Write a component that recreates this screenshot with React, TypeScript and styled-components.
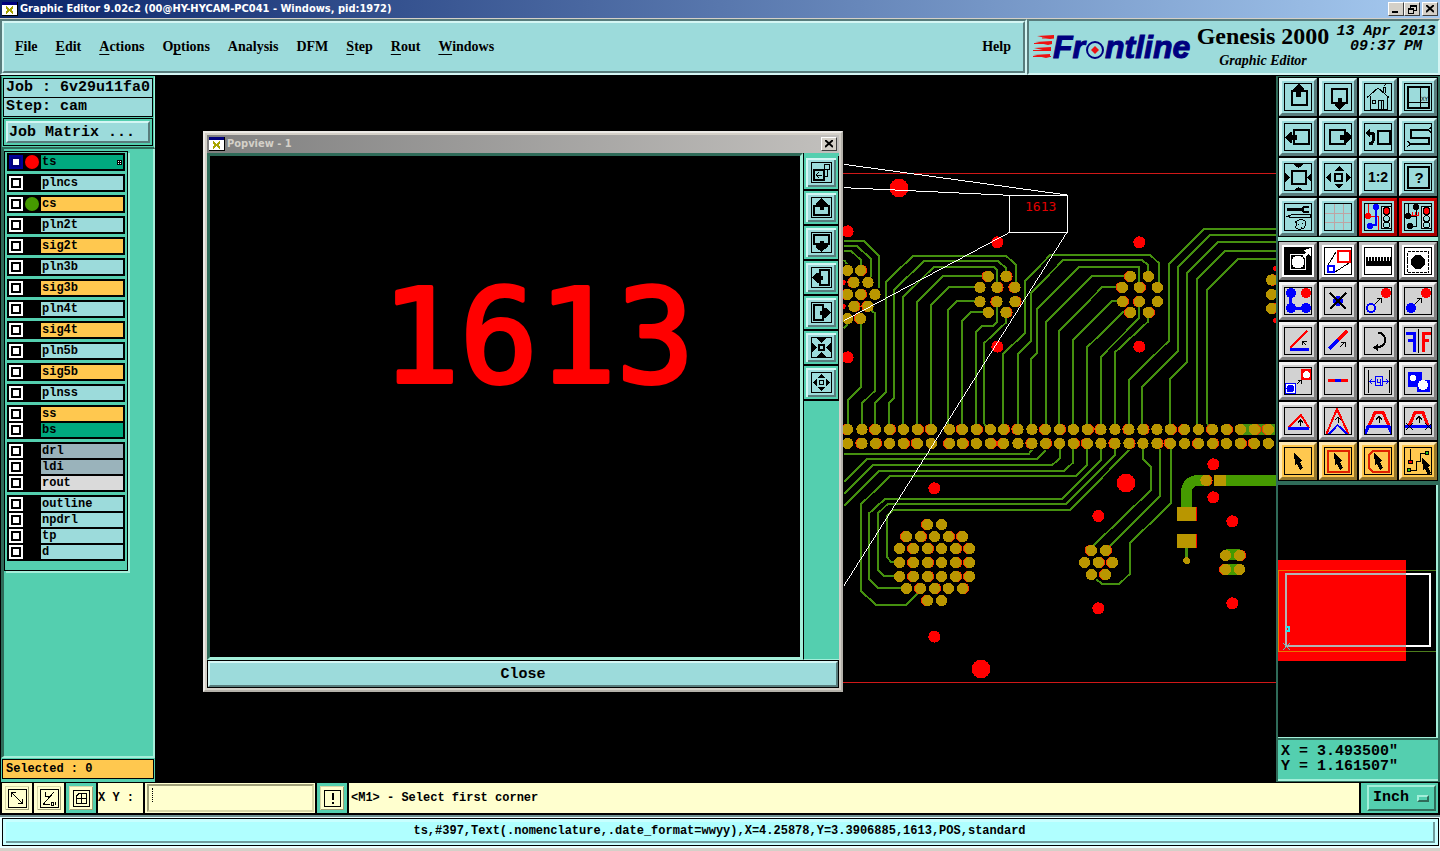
import React from 'react';
import styled, { createGlobalStyle, css } from 'styled-components';

const c = {
  panel: '#9cdbdb',
  panelLight: '#d4f6f4',
  panelDark: '#587c7c',
  teal: '#54cfaf',
  tealLight: '#a4efda',
  tealDark: '#2f6b59',
  amber: '#ffc84f',
  cream: '#ffffcf',
  creamLight: '#d8d8a8',
  creamDark: '#a0a078',
  grey: '#d2d2d2',
  face: '#d4d0c8',
  pad: '#b99600',
  trace: '#45900f',
  red: '#ff0000',
  blue: '#0000ff',
};

const mono = `'Liberation Mono', 'Courier New', monospace`;
const serif = `'Liberation Serif', 'Times New Roman', serif`;
const tahoma = `'DejaVu Sans Condensed', 'DejaVu Sans', sans-serif`;

const GlobalStyle = createGlobalStyle`
  * { box-sizing: border-box; }
  body { margin: 0; background: #000; color: #000; }
  button, input, select { font: inherit; color: inherit; margin: 0; padding: 0; border-radius: 0; }
  svg { display: block; }
`;

const bevel = (w: number, light: string, dark: string) => css`
  border-style: solid;
  border-width: ${w}px;
  border-color: ${light} ${dark} ${dark} ${light};
`;

const Page = styled.div`
  min-height: 100vh;
  display: flex;
  flex-direction: column;
`;

/* ---------- window title ---------- */
const TitleBar = styled.header<{ $inactive?: boolean }>`
  display: flex;
  align-items: center;
  gap: 2px;
  height: 18px;
  padding: 0 2px;
  flex: none;
  font: bold 11px/18px ${tahoma};
  color: ${p => (p.$inactive ? '#d4d0c8' : '#fff')};
  background: ${p =>
    p.$inactive ? 'linear-gradient(90deg,#808080,#c2c0bd)' : 'linear-gradient(90deg,#0a246a,#a6caf0)'};
`;
const TitleText = styled.span`
  flex: 1;
  white-space: nowrap;
`;
const WindowButtons = styled.div`
  display: flex;
`;
const WindowButton = styled.button<{ $apart?: boolean }>`
  width: 16px;
  height: 14px;
  margin-left: ${p => (p.$apart ? 2 : 0)}px;
  background: ${c.face};
  ${bevel(1, '#fff', '#404040')}
  display: grid;
  place-items: center;
`;

/* ---------- top row ---------- */
const TopRow = styled.div`
  display: flex;
  height: 57px;
  flex: none;
  background: ${c.panel};
  border-top: 1px solid #d4d0c8;
`;
const MenuFrame = styled.div`
  flex: 1;
  display: flex;
  ${bevel(2, c.panelDark, c.panelLight)}
`;
const MenuBar = styled.nav`
  flex: 1;
  display: flex;
  align-items: center;
  gap: 18px;
  padding: 0 12px 0 11px;
  font: bold 14px/18px ${serif};
  ${bevel(2, c.panelLight, c.panelDark)}
`;
const MenuItem = styled.button<{ $end?: boolean }>`
  border: 0;
  background: none;
  white-space: nowrap;
  margin-left: ${p => (p.$end ? 'auto' : 0)};
  u { text-underline-offset: 3px; text-decoration-thickness: 1px; }
`;
const Brand = styled.div`
  width: 413px;
  display: flex;
  ${bevel(2, c.panelDark, c.panelLight)}
`;
const Product = styled.div`
  width: 138px;
  text-align: center;
`;
const ProductName = styled.h1`
  margin: 0;
  font: bold 24px/30px ${serif};
  white-space: nowrap;
`;
const ProductMode = styled.div`
  font: italic bold 14px/20px ${serif};
`;
const Clock = styled.time`
  flex: 1;
  padding: 3px 0 0 2px;
  text-align: center;
  white-space: nowrap;
  font: italic bold 15px/15px ${mono};
`;

/* ---------- body ---------- */
const Body = styled.main`
  flex: 1;
  display: flex;
  min-height: 0;
  background: #000;
  padding-top: 1px;
`;
const LeftSide = styled.aside`
  width: 155px;
  flex: none;
  display: flex;
  flex-direction: column;
  background: ${c.teal};
  border-left: 1px solid #000;
`;
const Head = styled.div`
  border: 1px solid ${c.tealDark};
  border-color: ${c.teal} ${c.tealLight} ${c.tealDark} ${c.tealDark};
  border-bottom-width: 2px;
  padding: 1px;
`;
const Info = styled.div`
  height: 20px;
  margin-bottom: -1px;
  padding-left: 2px;
  border: 1px solid #000;
  background: ${c.panel};
  font: bold 15px/17px ${mono};
  white-space: pre;
`;
const MatrixFrame = styled.div`
  margin-top: 2px;
  padding: 2px;
  border: 1px solid #000;
`;
const MatrixButton = styled.button`
  width: 100%;
  height: 22px;
  padding-left: 1px;
  text-align: left;
  background: ${c.panel};
  font: bold 15px/17px ${mono};
  ${bevel(2, c.panelLight, c.panelDark)}
`;
const Scroll = styled.div`
  flex: 1;
  padding-top: 2px;
  border-left: 3px solid ${c.tealDark};
  border-right: 2px solid ${c.tealLight};
  border-bottom: 2px solid ${c.tealLight};
`;
const Layers = styled.div`
  width: 124px;
  height: 420px;
  padding: 1px 2px;
  border: 1px solid #000;
  box-shadow: 2px 2px 0 ${c.tealLight};
`;
const LayerGroup = styled.div`
  display: grid;
  gap: 2px;
  margin-bottom: 3px;
  padding: 2px;
  background: #000;
`;
const Layer = styled.label`
  display: grid;
  grid-template-columns: 14px 14px 1fr;
  column-gap: 2px;
  height: 14px;
`;
const LayerCheck = styled.input<{ $on: boolean }>`
  appearance: none;
  width: 14px;
  height: 14px;
  background: #fff;
  border: 2px solid ${p => (p.$on ? '#00009a' : '#fff')};
  box-shadow: inset 0 0 0 2px ${p => (p.$on ? '#00007c' : '#000')};
`;
const Dot = styled.span<{ $color?: string }>`
  border-radius: 50%;
  background: ${p => p.$color ?? 'transparent'};
`;
const LayerName = styled.span<{ $color: string }>`
  display: flex;
  justify-content: space-between;
  align-items: center;
  padding: 0 1px;
  overflow: hidden;
  background: ${p => p.$color};
  font: bold 12px/14px ${mono};
`;
const SelectedFrame = styled.div`
  padding: 1px 1px 3px;
`;
const Selected = styled.div`
  height: 20px;
  padding-left: 3px;
  border: 1px solid #000;
  background: ${c.amber};
  font: bold 12px/18px ${mono};
`;
const Stage = styled.section`
  position: relative;
  flex: 1;
  min-width: 0;
  overflow: hidden;
`;
const Board = styled.svg`
  position: absolute;
  inset: 0;
  width: 100%;
  height: 100%;
`;

/* ---------- pop-up view ---------- */
const Popup = styled.div`
  position: absolute;
  left: 48px;
  top: 55px;
  width: 640px;
  padding: 2px;
  background: ${c.face};
  ${bevel(2, '#eceae6', '#b4b1aa')}
`;
const PopBody = styled.div`
  display: flex;
  height: 507px;
  background: ${c.teal};
`;
const PopCanvas = styled.div`
  flex: 1;
  background: #000;
  border: 3px solid ${c.tealDark};
  border-right-color: ${c.tealLight};
  border-bottom-color: ${c.tealLight};
`;
const PopTools = styled.div`
  width: 36px;
  padding-top: 3px;
  border-left: 1px solid #000;
  border-bottom: 1px solid ${c.tealLight};
`;
const PopTool = styled.button`
  width: 35px;
  height: 35px;
  padding: 3px 4px;
  background: ${c.panel};
  border: 0;
  border-bottom: 2px solid #000;
  border-right: 1px solid #000;
  box-shadow: inset 0 0 0 2px ${c.teal}, inset 4px 4px 0 ${c.panelLight}, inset -4px -4px 0 ${c.panelDark};
  display: grid;
  place-items: center;
`;
const CloseRow = styled.div`
  padding: 1px;
  background: ${c.tealDark};
`;
const CloseButton = styled.button`
  width: 100%;
  height: 26px;
  padding-top: 1px;
  background: ${c.panel};
  font: bold 15px/20px ${mono};
  ${bevel(2, c.panelLight, c.panelDark)}
  outline: 1px solid #000;
`;

/* ---------- right side ---------- */
const RightSide = styled.aside`
  width: 164px;
  flex: none;
  display: flex;
  flex-direction: column;
  background: ${c.tealDark};
  padding: 1px 2px 0;
`;
const ToolGrid = styled.div<{ $second?: boolean }>`
  display: grid;
  grid-template-columns: repeat(4, 38px);
  gap: 2px;
  padding: 1px;
  background: #000;
  margin: ${p => (p.$second ? '0 0 4px' : '0')};
  border-bottom: ${p => (p.$second ? '0' : `4px solid ${c.tealLight}`)};
`;
type Tone = 'cyan' | 'alert' | 'white' | 'grey' | 'amber';
const tones: Record<Tone, [string, string, string]> = {
  cyan: [c.panel, c.panelLight, c.panelDark],
  alert: [c.panel, '#d80000', '#a80000'],
  white: ['#ffffff', '#c4c4c4', '#6c6c6c'],
  grey: [c.grey, '#f4f4f4', '#808080'],
  amber: [c.amber, '#ffe8b0', '#94762c'],
};
const Tool = styled.button<{ $tone: Tone }>`
  width: 38px;
  height: 38px;
  display: grid;
  place-items: center;
  background: ${p => tones[p.$tone][0]};
  ${p => bevel(3, tones[p.$tone][1], tones[p.$tone][2])}
`;
const Overview = styled.div`
  height: 253px;
  background: #000;
  border-right: 2px solid ${c.tealLight};
  border-bottom: 1px solid ${c.tealLight};
`;
const Coords = styled.div`
  flex: 1;
  padding: 4px 3px 0;
  margin-bottom: 1px;
  white-space: pre;
  background: ${c.teal};
  border: 2px solid ${c.tealDark};
  border-left: 0;
  border-right: 0;
  border-bottom-color: ${c.tealLight};
  font: bold 15px/15px ${mono};
`;

/* ---------- bottom rows ---------- */
const CommandRow = styled.div`
  display: flex;
  gap: 2px;
  height: 33px;
  flex: none;
  padding: 1px 2px 2px;
  background: #000;
  font: bold 12px/14px ${mono};
`;
const SmallTool = styled.button<{ $active?: boolean }>`
  width: 30px;
  flex: none;
  display: grid;
  place-items: center;
  background: ${c.cream};
  border: 3px solid ${p => (p.$active ? c.teal : c.cream)};
  box-shadow: inset 1px 1px 0 ${c.creamLight}, inset -1px -1px 0 ${c.creamDark};
`;
const EntryLabel = styled.label`
  width: 45px;
  flex: none;
  padding: 8px 0 0;
  background: ${c.cream};
  white-space: nowrap;
`;
const Entry = styled.div`
  position: relative;
  width: 170px;
  flex: none;
  padding: 1px 1px 1px 2px;
  background: ${c.cream};
`;
const EntryInput = styled.input`
  display: block;
  width: 100%;
  height: 28px;
  padding-left: 3px;
  background: ${c.cream};
  ${bevel(2, c.creamDark, c.creamLight)}
`;
const Caret = styled.span`
  position: absolute;
  left: 7px;
  top: 5px;
  height: 14px;
  border-left: 1px dotted #000;
  pointer-events: none;
`;
const Message = styled.div`
  flex: 1;
  padding: 8px 2px 0;
  background: ${c.cream};
  white-space: nowrap;
`;
const UnitBox = styled.div`
  position: relative;
  width: 77px;
  flex: none;
  padding: 2px 2px 2px 6px;
  background: ${c.teal};
`;
const UnitSelect = styled.select`
  appearance: none;
  width: 100%;
  height: 100%;
  padding-left: 4px;
  background: ${c.teal};
  font: bold 15px/18px ${mono};
  ${bevel(2, c.tealLight, c.tealDark)}
`;
const UnitMark = styled.span`
  position: absolute;
  right: 9px;
  top: 12px;
  width: 12px;
  height: 7px;
  pointer-events: none;
  ${bevel(2, c.tealLight, c.tealDark)}
`;
const StatusRow = styled.footer`
  height: 36px;
  flex: none;
  padding: 1px 1px 0 2px;
  background: #e8ffff;
  border-top: 2px solid #6e9090;
  border-bottom: 3px solid ${c.face};
`;
const Status = styled.div`
  height: 28px;
  padding: 3px;
  border: 1px solid #000;
  background: #c8ffff;
`;
const StatusText = styled.output`
  display: block;
  height: 21px;
  text-align: center;
  background: #b0ffff;
  font: bold 12px/19px ${mono};
  border-right: 2px solid #6e9c9c;
  border-bottom: 2px solid #6e9c9c;
  white-space: nowrap;
`;

/* ---------- drawings ---------- */
const AppIcon = () => (
  <svg width="16" height="14" viewBox="0 0 16 14" shapeRendering="crispEdges" aria-hidden="true">
    <rect width="15" height="13" fill="#fff" />
    <rect width="15" height="3" fill="#00007c" />
    <path d="M0 13.500H15.500V0" stroke="#000" fill="none" />
    <path d="M4 5l7 6M11 5l-7 6" stroke="#a8a400" strokeWidth="2" />
  </svg>
);

const CloseGlyph = () => (
  <svg width="8" height="8" viewBox="0 0 8 8" aria-hidden="true">
    <path d="M0 0l8 7M8 0l-8 7" stroke="#000" strokeWidth="2" />
  </svg>
);

const Logo = () => (
  <svg width="165" height="50" viewBox="1029 21 165 50" aria-label="Frontline">
    <path d="M1037 36l17-1v3l-4 1zM1035 42l17-1v3l-4 1zM1034 48l17-1v3l-4 1zM1033 55l17-1v3l-4 1z" fill="#ee1111" />
    <path d="M1042 38h12M1034 43.500h18M1033 50.500h18M1033 56.500h18" stroke="#ee1111" />
    <g fill="#000080" stroke="#000080" fontFamily="'Liberation Sans', Arial, sans-serif" fontWeight="bold" fontStyle="italic" fontSize="32">
      <text x="1053" y="58">Fr</text>
      <text x="1105" y="58">ntline</text>
    </g>
    <circle cx="1095" cy="50" r="8" fill={c.panel} stroke="#000080" strokeWidth="2" />
    <path d="M1095 46l4 4l-4 4l-4-4z" fill="#ee1111" />
  </svg>
);

const Traffic = () => (
  <>
    <rect x="17.500" y="3.500" width="10" height="22" fill="#c8dcdc" stroke="#000" />
    <circle cx="22.500" cy="8" r="3.500" fill="red" stroke="#000" />
    <circle cx="22.500" cy="15.500" r="3" fill={c.panel} stroke="#000" />
    <circle cx="22.500" cy="22" r="3" fill={c.panel} stroke="#000" />
  </>
);

const Pointer = ({ x, y }: { x: number; y: number }) => (
  <path transform={`translate(${x} ${y})`} d="M0 0L8 7L6 9L9 15L6 17L3 11L1 12Z" fill="#000" />
);

const arrowUp = 'M15 1l5 5v2h-3v6h-5v-6h-3v-2z';

type Art = React.ReactNode;
const K = { stroke: '#000', fill: 'none' };

const toolsTop: [string, Tone, Art][] = [
  ['Pan up', 'cyan', <><rect x="8" y="8" width="15" height="14" {...K} strokeWidth="2" /><path d={arrowUp} /></>],
  ['Pan down', 'cyan', <><rect x="8" y="6" width="15" height="14" {...K} strokeWidth="2" /><path d="M15.500 27l5-5v-2h-3v-5h-4v5h-3v2z" /></>],
  ['Home', 'cyan', <><path d="M3 14.500L14 5l11 9.500M6.500 12.500V26.500H23.500V12.500M21.500 10V4.500h-2v4M20 3l2-2M14.500 26V17.500h5V26M8.500 17.500h3v3h-3zM17.500 18v8" {...K} /></>],
  ['Window XY', 'cyan', <><rect x="4" y="4" width="21" height="21" {...K} strokeWidth="2" /><path d="M16.500 4v21M4 19.500h21" {...K} /><text x="17" y="18" fontSize="6" fontFamily="DejaVu Sans Mono">XY</text></>],
  ['Pan left', 'cyan', <><rect x="10" y="7" width="15" height="14" {...K} strokeWidth="2" /><path d="M1 14l5-5h2v3h5v5h-5v3h-2z" /></>],
  ['Pan right', 'cyan', <><rect x="6" y="7" width="15" height="14" {...K} strokeWidth="2" /><path d="M28 14l-5-5h-2v3h-5v5h5v3h2z" /></>],
  ['Previous view', 'cyan', <><rect x="14" y="8" width="12" height="13" {...K} strokeWidth="2" /><path d="M4 10h4q2 1 2 4t-2 6h-3" {...K} strokeWidth="3" /><path d="M1 10l5-5v10z" /></>],
  ['Serpentine', 'cyan', <><path d="M25 7H7V15H25V21H6" {...K} strokeWidth="2" /><path d="M24 7l4-3M24 7l4 3M7 21l-4-3M7 21l-4 3" {...K} /></>],
  ['Zoom in', 'cyan', <><rect x="8" y="8" width="14" height="13" {...K} strokeWidth="2" /><path d="M9 1h11l-5.500 4zM9 28h11l-5.500-4zM1 9v11l5-5.500zM28 9v11l-5-5.500z" /></>],
  ['Zoom out', 'cyan', <><rect x="11" y="11" width="7" height="7" {...K} strokeWidth="2" /><path d="M10 8h10l-5-5zM10 21h10l-5 4zM7 9v11l-5-5.500zM22 9v11l5-5.500z" /></>],
  ['Zoom ratio', 'cyan', <text x="14" y="19" textAnchor="middle" fontWeight="bold" fontSize="14" fontFamily="Liberation Sans">1:2</text>],
  ['Help on view', 'cyan', <><rect x="4" y="4" width="21" height="21" {...K} strokeWidth="2" /><text x="15" y="20" textAnchor="middle" fontWeight="bold" fontSize="15" fontFamily="Liberation Sans">?</text></>],
  ['Setup', 'cyan', <><path d="M3 6.500h15" {...K} strokeWidth="3" /><path d="M25 4h-5l-2 2l2 3h5" {...K} strokeWidth="2" /><path d="M3 13.500l5-2h18v3H8zM11 19q5-4 10-1q2 3-1 7q-6 3-9-1q4-3 0-5M14 21h1M18 20h1M17 24h1" {...K} /></>],
  ['Grid', 'cyan', <path d="M10.500 1v26M19.500 1v26M1 10.500h26M1 19.500h26" stroke="#bfa4a4" fill="none" />],
  ['Layer signals', 'alert', <><path d="M4.500 1v12M4 13.500h10v14" stroke="red" fill="none" /><path d="M12 5v17H7" stroke={c.blue} strokeWidth="2" fill="none" /><circle cx="4" cy="13" r="3" fill="red" /><circle cx="12" cy="4" r="3" fill={c.blue} /><circle cx="6" cy="23" r="3" fill={c.blue} /><Traffic /></>],
  ['Net signals', 'alert', <><path d="M4.500 1v12M12.500 5v18H6M4 13h9" {...K} /><path d="M7 12.500h7M8.500 9v4M11.500 9v4M14.500 9v4" stroke="red" /><circle cx="4" cy="13" r="3" /><circle cx="12" cy="4" r="3" /><circle cx="6" cy="23" r="3" /><Traffic /></>],
];

const toolsBottom: [string, Tone, Art][] = [
  ['Pop view', 'white', <><rect width="28" height="28" /><rect x="6.500" y="7.500" width="15" height="15" stroke="#fff" fill="none" /><circle cx="14" cy="15" r="6.500" fill="#fff" /><path d="M18 9l4-3l-2-3l7-2v8l-3-2l-4 4z" fill="#fff" /></>],
  ['Copy view', 'white', <><path d="M4 18L12 5M11 25l14-9" {...K} /><rect x="14" y="4" width="12" height="11" fill="none" stroke="red" strokeWidth="2" /><rect x="4" y="19" width="6" height="6" fill="none" stroke={c.blue} strokeWidth="2" /></>],
  ['Measure', 'white', <path d="M2 10h2v4h1v-4h2v4h1v-4h2v4h1v-4h2v4h1v-4h2v4h1v-4h2v4h1v-4h2v4h1v-4h2v4h1v-4h1v9H2z" />],
  ['Highlight', 'white', <><rect x="3.500" y="4.500" width="21" height="21" {...K} strokeDasharray="3 1" /><circle cx="14" cy="15" r="7" /></>],
  ['Connect pads', 'grey', <><path d="M6.500 6v15.500h15" stroke={c.blue} strokeWidth="3" fill="none" /><circle cx="7" cy="6" r="5" fill={c.blue} /><circle cx="7" cy="21" r="5" fill={c.blue} /><circle cx="22" cy="21" r="5" fill={c.blue} /><circle cx="22" cy="6" r="5" fill="red" /></>],
  ['Delete', 'grey', <><circle cx="14" cy="14" r="5" fill={c.blue} /><path d="M6 6l16 16M22 6l-16 16" {...K} strokeWidth="2" /></>],
  ['Move', 'grey', <><circle cx="7" cy="21" r="4" fill="none" stroke={c.blue} strokeWidth="2" /><circle cx="22" cy="6" r="5" fill="red" /><path d="M11 17l6-6M13 11.500h4.500v4" {...K} /></>],
  ['Copy', 'grey', <><circle cx="7" cy="21" r="5" fill={c.blue} /><circle cx="22" cy="6" r="5" fill="red" /><path d="M11 17l6-6M13 11.500h4.500v4" {...K} /></>],
  ['Rotate', 'grey', <><path d="M6 21L23 4" stroke="red" strokeWidth="2" /><path d="M6 22.500h19" stroke={c.blue} strokeWidth="3" /><path d="M22 18l-4-4M18.500 18v-4h4" {...K} /></>],
  ['Stretch', 'grey', <><path d="M14 13l9-9" stroke="red" strokeWidth="3" /><path d="M5 22l9-9" stroke={c.blue} strokeWidth="3" /><path d="M16 20l5-5M17 15.500h4.500v4" {...K} /></>],
  ['Turn', 'grey', <><path d="M14 6q7 0 7 7q0 7-8 7" {...K} strokeWidth="2" /><path d="M9 20.500l5-4v8z" /></>],
  ['Mirror', 'grey', <><path d="M14.500 2v24" {...K} /><path d="M2 6.500h8.500v18M4 13.500h7" stroke={c.blue} strokeWidth="3" fill="none" /><path d="M27 6.500h-7.500v18M25 13.500h-6" stroke="red" strokeWidth="3" fill="none" /></>],
  ['Replace', 'grey', <><rect x="1.500" y="16.500" width="10" height="10" fill="#fff" stroke={c.blue} /><circle cx="6.500" cy="21.500" r="4" fill={c.blue} /><rect x="17" y="2" width="11" height="11" fill="red" /><circle cx="22.500" cy="7.500" r="3.500" fill="#fff" /><path d="M13 17l4-4M14 13.500h3v3" {...K} /></>],
  ['Merge line', 'grey', <><path d="M4 13.500h20" stroke="red" strokeWidth="3" /><path d="M11 13.500h6" stroke={c.blue} strokeWidth="3" /></>],
  ['Spacing', 'grey', <><path d="M4.500 3v23M25.500 3v23" {...K} /><path d="M6 14.500h5M19 14.500h5M8 12l-2.500 2.500L8 17M22 12l2.500 2.500L22 17M11.500 9.500h7v9h-7zM13.500 12v3h3M16.500 12v6" stroke={c.blue} fill="none" /></>],
  ['Merge shapes', 'grey', <><path d="M4 5h14v8h8v12H13v-5H4z" fill={c.blue} /><circle cx="9" cy="11" r="3" fill="#fff" /><circle cx="19" cy="18" r="5" fill="#fff" /></>],
  ['Corner A', 'grey', <><path d="M4 21L17 8L25 21" stroke="red" strokeWidth="2" fill="none" /><path d="M4 21.500h21" stroke={c.blue} strokeWidth="3" /><path d="M16.500 19v-6M14 15.500l2.500-2.500l2.500 2.500" {...K} /></>],
  ['Corner B', 'grey', <><path d="M2 28L13 2L25 28" stroke="red" strokeWidth="2" fill="none" /><path d="M4 28L13.500 18L24 28" stroke={c.blue} strokeWidth="2" fill="none" /><path d="M14.500 16v-6M11 13l3-3l3 3" {...K} /></>],
  ['Edge A', 'grey', <><path d="M5 19L11 5.500h8L25 19" stroke="red" strokeWidth="3" fill="none" /><path d="M1 28L4 19.500H25L28 28" stroke={c.blue} strokeWidth="3" fill="none" /><path d="M15.500 16v-6M12 12.500l3-3l3 3" {...K} /></>],
  ['Edge B', 'grey', <><path d="M5 19L11 5.500h8L24 19" stroke="red" strokeWidth="3" fill="none" /><path d="M1 19.500H28" stroke={c.blue} strokeWidth="3" /><path d="M15.500 16v-6M12 12.500l3-3l3 3M2 16l7 7M9 16l-7 7M21 16l7 7M28 16l-7 7" {...K} /></>],
  ['Select', 'amber', <Pointer x={10} y={6} />],
  ['Select frame', 'amber', <><rect x="4" y="4" width="21" height="21" fill="none" stroke="#e02000" strokeWidth="2" /><Pointer x={10} y={6} /></>],
  ['Select polygon', 'amber', <><path d="M9 4h16v21H9l-4-4V8z" fill="none" stroke="#e02000" strokeWidth="2" /><Pointer x={10} y={6} /></>],
  ['Select net', 'amber', <><path d="M6.500 2v13M5 23.500h7.500v-9h4V6.500h7" {...K} /><circle cx="6.500" cy="15" r="2" fill="red" stroke="#000" /><circle cx="23" cy="6" r="2" fill="#2c2" stroke="#000" /><circle cx="5" cy="23" r="2" fill="#2c2" stroke="#000" /><Pointer x={18} y={11} /></>],
];

const popTools: [string, Art][] = [
  ['Main view', <><rect x="3" y="8" width="10" height="10" {...K} strokeWidth="2" /><rect x="13.500" y="2.500" width="5" height="5" {...K} /><path d="M16.500 8v6H14M5 13h6M8 10l-3 3l3 3" {...K} /></>],
  ['View up', <><rect x="3" y="9" width="15" height="9" {...K} strokeWidth="2" /><path d="M10.500 1l6 6v2h-4v4h-4v-4h-4v-2z" /></>],
  ['View down', <><rect x="3" y="3" width="15" height="9" {...K} strokeWidth="2" /><path d="M10.500 20l6-5v-2h-4v-4h-4v4h-4v2z" /></>],
  ['View left', <><rect x="9" y="3" width="9" height="15" {...K} strokeWidth="2" /><path d="M1 10.500l5-5h2v3h4v4h-4v3h-2z" /></>],
  ['View right', <><rect x="3" y="3" width="9" height="15" {...K} strokeWidth="2" /><path d="M20 10.500l-5-5h-2v3h-4v4h4v3h2z" /></>],
  ['View in', <><rect x="8" y="8" width="5" height="5" {...K} strokeWidth="2" /><path d="M5 1h11l-5.500 5zM5 20h11l-5.500-5zM1 5v11l5-5.500zM20 5v11l-5-5.500z" /></>],
  ['View out', <><rect x="8.500" y="8.500" width="4" height="4" {...K} /><path d="M7 6h7l-3.500-4zM7 15h7l-3.500 4zM6 7v7l-4-3.500zM15 7v7l4-3.500z" /></>],
];

const Icon = ({ size, framed = true, children }: { size: number; framed?: boolean; children: Art }) => (
  <svg width={size} height={size} viewBox={`0 0 ${size} ${size}`} shapeRendering="crispEdges" aria-hidden="true">
    {children}
    {framed && <rect x="0.500" y="0.500" width={size - 1} height={size - 1} fill="none" stroke="#000" />}
  </svg>
);

/* board artwork, in thirds of a screen pixel */
const upperTraces = [
  '3,272 62,272 108,318 108,415', '3,288 42,288 85,328 85,380', '3,303 25,303 53,330 53,350', '3,330 12,342',
  '3,535 15,520', '53,520 53,712 14,750 14,830', '80,478 96,490 96,722 57,760 57,830',
  '519,400 519,345 490,318 210,318 129,395 129,727 96,760 96,830',
  '490,370 490,355 465,333 243,333 153,420 153,744 138,759 138,830',
  '462,400 462,360 452,351 272,351 180,442 180,830', '425,379 299,379 222,456 222,830',
  '400,411 319,411 264,466 264,830', '400,454 341,454 315,480 315,830', '425,487 384,487 357,514 357,830',
  '462,460 462,515 450,528 418,528 399,545 399,830', '490,495 490,517 423,580 423,820 430,830',
  '948,400 948,340 922,315 622,315 547,392 547,548 480,612 480,830',
  '915,370 915,345 898,331 660,331 565,428 565,573 525,611 525,830',
  '888,400 888,351 709,351 583,475 583,608 565,626 565,830', '850,379 747,379 609,515 609,830',
  '830,411 778,411 648,544 648,830', '830,454 807,454 690,570 690,830', '855,487 840,487 732,592 732,830',
  '888,460 888,505 774,620 774,830', '915,500 915,515 816,607 816,830',
  '1299,237 1082,237 979,340 979,571 858,690 858,830', '1299,255 1100,255 1005,350 1005,604 897,710 897,830',
  '1299,276 1124,276 1032,368 1032,637 981,686 981,830', '1299,302 1148,302 1061,388 1061,830',
  '1299,328 1184,328 1092,420 1092,820 1098,830',
];
const lowerTraces = [
  '567,30 557,42 3,42', '608,30 583,57 72,57 3,125', '650,28 650,55 628,75 90,75 3,162',
  '690,28 690,68 664,92 108,92 3,198', '732,28 732,75 700,108 141,108 54,193 54,453 98,494 190,494 225,460',
  '774,28 774,60 657,177 126,177 78,220 78,417 105,444 180,444',
  '816,28 816,45 669,192 134,192 105,220 105,390 124,408 160,408',
  '858,30 682,210 150,210 132,228 132,352 145,366 160,366',
  '900,28 900,58 924,80 924,150 750,318', '950,28 950,170 800,318',
  '984,28 984,190 862,308 862,400 828,433 778,433 760,418',
];
const rowX = [14, 57, 98, 140, 181, 223, 265, 320, 358, 400, 442, 482, 525, 567, 608, 650, 691, 733, 774, 816, 858, 900, 942, 982, 1025, 1067, 1109, 1150, 1192, 1234, 1276];
const cluster = (dx: number): number[][] => [[436, 379], [489, 379], [411, 412], [462, 412], [516, 412], [411, 455], [462, 455], [516, 455], [436, 487], [489, 487]].map(([x, y]) => [x + dx, y]);
const upperPads: number[][] = [
  ...rowX.map(x => [x, 838]), ...rowX.map(x => [x, 880]), ...cluster(0), ...cluster(427),
  [14, 361], [53, 361], [33, 397], [75, 397], [14, 433], [53, 433], [96, 433], [33, 469], [75, 469], [14, 506], [53, 506],
  [1286, 390], [1286, 433], [1286, 475],
];
const six = [170, 212, 254, 296, 338, 380];
const five = [191, 233, 275, 316, 359];
const lowerPads: number[][] = [
  [254, 254], [296, 254], ...five.map(x => [x, 290]), ...six.map(x => [x, 326]), ...six.map(x => [x, 368]),
  ...six.map(x => [x, 409]), ...five.map(x => [x, 445]), [254, 482], [296, 482],
  [745, 331], [788, 331], [725, 367], [766, 367], [809, 367], [745, 404], [788, 404], [1089, 121],
  [1148, 346], [1190, 346], [1148, 388], [1190, 388],
];
const Pads = ({ at }: { at: number[][] }) => (
  <>
    {at.map(([x, y], i) => (
      <g key={i}>
        {i % 3 !== 1 && <circle cx={x + (i % 2 ? 3 : -3)} cy={y} r="17" fill="#ff3000" />}
        <circle cx={x} cy={y} r="17" fill={c.pad} />
      </g>
    ))}
  </>
);
const Traces = ({ lines }: { lines: string[] }) => (
  <g fill="none" stroke={c.trace} strokeWidth="6">
    {lines.map(l => <polyline key={l} points={l} />)}
  </g>
);
const Marks = ({ at }: { at: number[][] }) => (
  <g fill={c.red}>
    {at.map(([x, y, r], i) => <circle key={i} cx={x} cy={y} r={r ?? 18} />)}
  </g>
);

const BoardArt = () => (
  <Board viewBox="155 76 1121 706" preserveAspectRatio="xMinYMin slice" shapeRendering="crispEdges" aria-hidden="true">
    <path d="M843 173h433v1H843zM843 682h433v1H843z" fill="#d01818" />
    <g transform="translate(843 150) scale(0.33333)">
      <rect x="1192" y="822" width="104" height="33" fill={c.trace} />
      <Traces lines={upperTraces} />
      <Marks at={[[1298, 355, 8], [1298, 512, 8], [0, 397, 8], [0, 469, 8]]} />
      <Pads at={upperPads} />
      <Marks at={[[168, 114, 28], [14, 244], [463, 277], [889, 277], [463, 590], [889, 590], [14, 622]]} />
      <g transform="translate(0 870)">
        <Traces lines={lowerTraces} />
        <path d="M1299 121H1115M1100 121H1070Q1030 121 1030 161V205M1148 345H1190M1148 388H1190" stroke="#459a00" strokeWidth="33" fill="none" />
        <path d="M1031 320V360" stroke={c.trace} strokeWidth="9" />
        <path d="M1006 201h56v42h-56zM1006 282h56v42h-56z" fill="red" />
        <path d="M1002 201h57v42h-57zM1002 282h57v42h-57zM1113 104h36v34h-36z" fill={c.pad} />
        <circle cx="1031" cy="362" r="10" fill={c.pad} />
        <Pads at={lowerPads} />
        <Marks at={[[274, 145], [1111, 73], [1111, 172], [766, 228], [1168, 244], [766, 505], [1168, 490], [274, 590], [849, 129, 28], [414, 687, 28]]} />
      </g>
      <path d="M3 43L672 135M3 113L500 136M500 136H674V247H500ZM500 247L3 512M672 247L3 1307" stroke="#fff" strokeWidth="3" fill="none" />
    </g>
    <text x="1025" y="211" fill="#e00000" fontSize="13" fontFamily="DejaVu Sans Mono">1613</text>
  </Board>
);

const OverviewArt = () => (
  <svg width="158" height="252" viewBox="1278 485 158 252" shapeRendering="crispEdges" aria-hidden="true">
    <rect x="1278" y="560" width="128" height="101" fill="red" />
    <path d="M1440 570.500H1278.500V651.500H1440" fill="none" stroke="#4c7c1c" />
    <path d="M1406 570.500H1278.500V651.500H1406" fill="none" stroke="#e87800" />
    <path d="M1406 574H1430V646H1406" fill="none" stroke="#fff" strokeWidth="2" />
    <path d="M1406 574H1286V646H1406" fill="none" stroke="#b4b4b4" strokeWidth="2" />
    <path d="M1286 627h3v4h-3" fill="none" stroke="#20e8f0" strokeWidth="2" />
    <path d="M1283 643l7 7M1290 643l-7 7" stroke="#50c8c8" />
  </svg>
);

/* ---------- data ---------- */
const layerColors = { p: c.panel, s: c.amber, g: '#00a97f', d: '#9ab3bb', r: '#dadada' };
type LayerDef = [string, keyof typeof layerColors, string?];
const layerGroups: LayerDef[][] = [
  [['ts', 'g', 'red']], [['plncs', 'p']], [['cs', 's', '#459a00']], [['pln2t', 'p']], [['sig2t', 's']],
  [['pln3b', 'p']], [['sig3b', 's']], [['pln4t', 'p']], [['sig4t', 's']], [['pln5b', 'p']], [['sig5b', 's']],
  [['plnss', 'p']], [['ss', 's'], ['bs', 'g']], [['drl', 'd'], ['ldi', 'd'], ['rout', 'r']],
  [['outline', 'p'], ['npdrl', 'p'], ['tp', 'p'], ['d', 'p']],
];
const menus: [string, string, string][] = [
  ['', 'F', 'ile'], ['', 'E', 'dit'], ['', 'A', 'ctions'], ['O', 'p', 'tions'], ['Analysis', '', ''],
  ['DFM', '', ''], ['', 'S', 'tep'], ['', 'R', 'out'], ['', 'W', 'indows'],
];

export default function App() {
  return (
    <Page>
      <GlobalStyle />
      <TitleBar>
        <AppIcon />
        <TitleText>Graphic Editor 9.02c2 (00@HY-HYCAM-PC041 - Windows, pid:1972)</TitleText>
        <WindowButtons>
          <WindowButton aria-label="Minimize">
            <svg width="8" height="8" viewBox="0 0 8 8"><path d="M0 7h6" stroke="#000" strokeWidth="2" /></svg>
          </WindowButton>
          <WindowButton aria-label="Restore">
            <svg width="9" height="9" viewBox="0 0 9 9" shapeRendering="crispEdges">
              <path d="M2.500 3V0.500h6v5H6M0.500 3.500h5v5h-5zM2 1.500h7M0 4.500h6" {...K} />
            </svg>
          </WindowButton>
          <WindowButton aria-label="Close window" $apart><CloseGlyph /></WindowButton>
        </WindowButtons>
      </TitleBar>

      <TopRow>
        <MenuFrame>
          <MenuBar>
            {menus.map(([a, b, d]) => (
              <MenuItem key={a + b + d}>{a}{b && <u>{b}</u>}{d}</MenuItem>
            ))}
            <MenuItem $end>Help</MenuItem>
          </MenuBar>
        </MenuFrame>
        <Brand>
          <Logo />
          <Product>
            <ProductName>Genesis 2000</ProductName>
            <ProductMode>Graphic Editor</ProductMode>
          </Product>
          <Clock>13 Apr 2013<br />09:37 PM</Clock>
        </Brand>
      </TopRow>

      <Body>
        <LeftSide>
          <Head>
            <Info>Job : 6v29u11fa0</Info>
            <Info>Step: cam</Info>
            <MatrixFrame><MatrixButton>Job Matrix ...</MatrixButton></MatrixFrame>
          </Head>
          <Scroll>
            <Layers>
              {layerGroups.map(group => (
                <LayerGroup key={group[0][0]}>
                  {group.map(([name, kind, dot]) => (
                    <Layer key={name}>
                      <LayerCheck type="checkbox" $on={name === 'ts'} defaultChecked={name === 'ts'} />
                      <Dot $color={dot} />
                      <LayerName $color={layerColors[kind]}>
                        {name}
                        {name === 'ts' && (
                          <svg width="5" height="5" viewBox="0 0 5 5" shapeRendering="crispEdges">
                            <rect width="5" height="5" /><path d="M1 1h1v1H1zM3 1h1v1H3zM1 3h1v1H1zM3 3h1v1H3z" fill="#fff" />
                          </svg>
                        )}
                      </LayerName>
                    </Layer>
                  ))}
                </LayerGroup>
              ))}
            </Layers>
          </Scroll>
          <SelectedFrame><Selected>Selected : 0</Selected></SelectedFrame>
        </LeftSide>

        <Stage>
          <BoardArt />
          <Popup role="dialog" aria-label="Popview - 1">
            <TitleBar as="div" $inactive>
              <AppIcon />
              <TitleText>Popview - 1</TitleText>
              <WindowButton aria-label="Close popview"><CloseGlyph /></WindowButton>
            </TitleBar>
            <PopBody>
              <PopCanvas>
                <svg width="100%" height="100%" viewBox="210 156 590 501">
                  <text x="538" y="382" textAnchor="middle" fontSize="130" fontFamily="'DejaVu Sans Mono', monospace" fill="red" stroke="red" strokeWidth="4" strokeLinejoin="round">1613</text>
                </svg>
              </PopCanvas>
              <PopTools>
                {popTools.map(([name, art]) => (
                  <PopTool key={name} aria-label={name}><Icon size={21}>{art}</Icon></PopTool>
                ))}
              </PopTools>
            </PopBody>
            <CloseRow><CloseButton>Close</CloseButton></CloseRow>
          </Popup>
        </Stage>

        <RightSide>
          <ToolGrid>
            {toolsTop.map(([name, tone, art]) => (
              <Tool key={name} $tone={tone} aria-label={name}><Icon size={28}>{art}</Icon></Tool>
            ))}
          </ToolGrid>
          <ToolGrid $second>
            {toolsBottom.map(([name, tone, art]) => (
              <Tool key={name} $tone={tone} aria-label={name}><Icon size={28}>{art}</Icon></Tool>
            ))}
          </ToolGrid>
          <Overview><OverviewArt /></Overview>
          <Coords>{'X = 3.493500"\nY = 1.161507"'}</Coords>
        </RightSide>
      </Body>

      <CommandRow>
        <SmallTool aria-label="Absolute">
          <Icon size={19}><path d="M3.500 8V3.500H8M3.500 3.500l11 11M14.500 10v4.500H10" {...K} /></Icon>
        </SmallTool>
        <SmallTool aria-label="Angle">
          <Icon size={19}><path d="M3 15.500h7M3 15.500L14 3M5.500 3v4h3M11 13h2v3h-2zM15 13v3" {...K} /></Icon>
        </SmallTool>
        <SmallTool $active aria-label="Snap grid">
          <Icon size={17}><path d="M3.500 13.500V6l3-3h7v10.500zM8.500 3v11M3 8.500h11" {...K} /></Icon>
        </SmallTool>
        <EntryLabel htmlFor="xy">X Y :</EntryLabel>
        <Entry><EntryInput id="xy" type="text" /><Caret /></Entry>
        <SmallTool $active aria-label="Attention">
          <Icon size={17}><path d="M8 3h2v7H8zM8 12h2v2H8z" /></Icon>
        </SmallTool>
        <Message>&lt;M1&gt; - Select first corner</Message>
        <UnitBox>
          <UnitSelect aria-label="Units" defaultValue="Inch"><option>Inch</option></UnitSelect>
          <UnitMark />
        </UnitBox>
      </CommandRow>
      <StatusRow>
        <Status>
          <StatusText>ts,#397,Text(.nomenclature,.date_format=wwyy),X=4.25878,Y=3.3906885,1613,POS,standard</StatusText>
        </Status>
      </StatusRow>
    </Page>
  );
}
